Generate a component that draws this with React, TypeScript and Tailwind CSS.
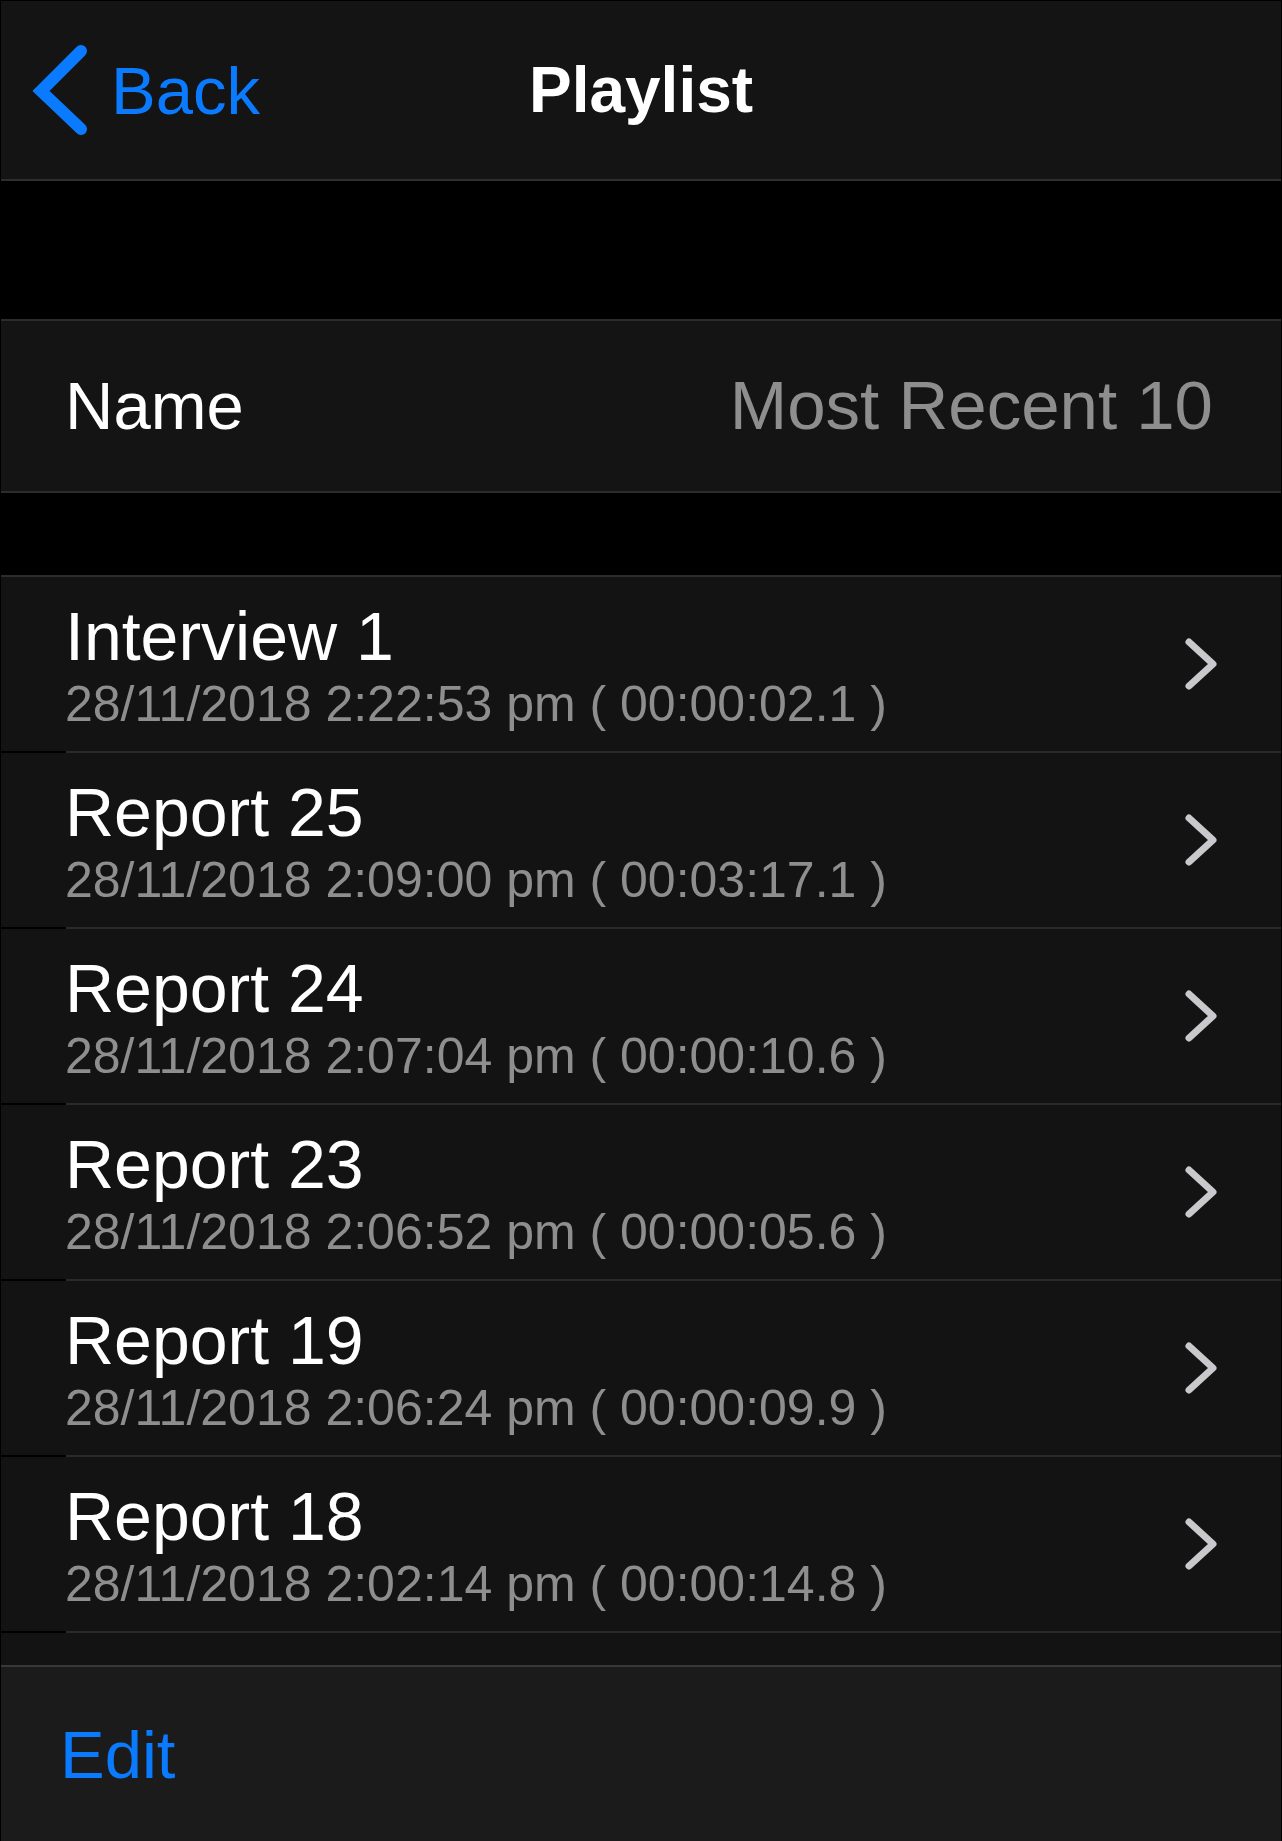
import React from 'react'

const font = { fontFamily: '"Liberation Sans", Arial, sans-serif' }

const items = [
  { title: 'Interview 1', sub: '28/11/2018 2:22:53 pm ( 00:00:02.1 )' },
  { title: 'Report 25', sub: '28/11/2018 2:09:00 pm ( 00:03:17.1 )' },
  { title: 'Report 24', sub: '28/11/2018 2:07:04 pm ( 00:00:10.6 )' },
  { title: 'Report 23', sub: '28/11/2018 2:06:52 pm ( 00:00:05.6 )' },
  { title: 'Report 19', sub: '28/11/2018 2:06:24 pm ( 00:00:09.9 )' },
  { title: 'Report 18', sub: '28/11/2018 2:02:14 pm ( 00:00:14.8 )' },
]

const Chevron = () => (
  <svg width="36" height="56" viewBox="0 0 36 56" className="mr-[62px] shrink-0">
    <polyline
      points="6,6 30,28 6,50"
      fill="none"
      stroke="#c9c9cd"
      strokeWidth="7"
      strokeLinecap="round"
      strokeLinejoin="round"
    />
  </svg>
)

function Row({ title, sub }: { title: string; sub: string }) {
  return (
    <div className="h-[176px] shrink-0 flex flex-col bg-[#131313]">
      <div className="flex-1 flex items-center">
        <div className="flex-1 flex flex-col pl-[64px] pt-[2px]">
          <div className="text-[68px] leading-[75px] text-white">{title}</div>
          <div className="text-[50px] leading-[56px] mt-[2px] text-[#8e8e8e]">{sub}</div>
        </div>
        <Chevron />
      </div>
      <div className="h-[2px] flex">
        <div className="w-[65px] bg-black" />
        <div className="flex-1 bg-[#2a2a2a]" />
      </div>
    </div>
  )
}

export default function App() {
  return (
    <div className="w-[1282px] h-[1841px] bg-black pt-px px-px flex flex-col overflow-hidden" style={font}>
      {/* nav bar */}
      <div className="h-[180px] shrink-0 bg-[#141414] border-b-2 border-[#2e2e2e] grid grid-cols-[1fr_auto_1fr] items-center">
        <div className="flex items-center pl-[30px] text-[#0a7bff]">
          <svg width="60" height="90" viewBox="0 0 60 90" className="shrink-0">
            <polyline
              points="50,10 10,50 50,88"
              fill="none"
              stroke="#0a7bff"
              strokeWidth="12"
              strokeLinecap="round"
              strokeLinejoin="miter"
              transform="translate(0,-4)"
            />
          </svg>
          <span className="text-[67px] leading-none ml-[20px]">Back</span>
        </div>
        <div className="text-[64px] font-bold text-white leading-none">Playlist</div>
        <div />
      </div>

      <div className="h-[138px] shrink-0" />

      {/* name row */}
      <div className="h-[174px] shrink-0 bg-[#141414] border-y-2 border-[#2c2c2c] flex items-center justify-between pl-[64px] pr-[68px]">
        <span className="text-[67px] text-white">Name</span>
        <span className="text-[69px] text-[#8e8e8e]">Most Recent 10</span>
      </div>

      <div className="h-[82px] shrink-0" />

      {/* list */}
      <div className="flex-1 overflow-hidden flex flex-col border-t-2 border-[#2c2c2c]">
        {items.map((it) => (
          <Row key={it.title} title={it.title} sub={it.sub} />
        ))}
        <div className="flex-1 bg-[#131313]" />
      </div>

      {/* toolbar */}
      <div className="h-[176px] shrink-0 bg-[#1b1b1b] border-t-2 border-[#383838] flex items-center pl-[59px]">
        <span className="text-[67px] text-[#0a7bff] leading-none">Edit</span>
      </div>
    </div>
  )
}
